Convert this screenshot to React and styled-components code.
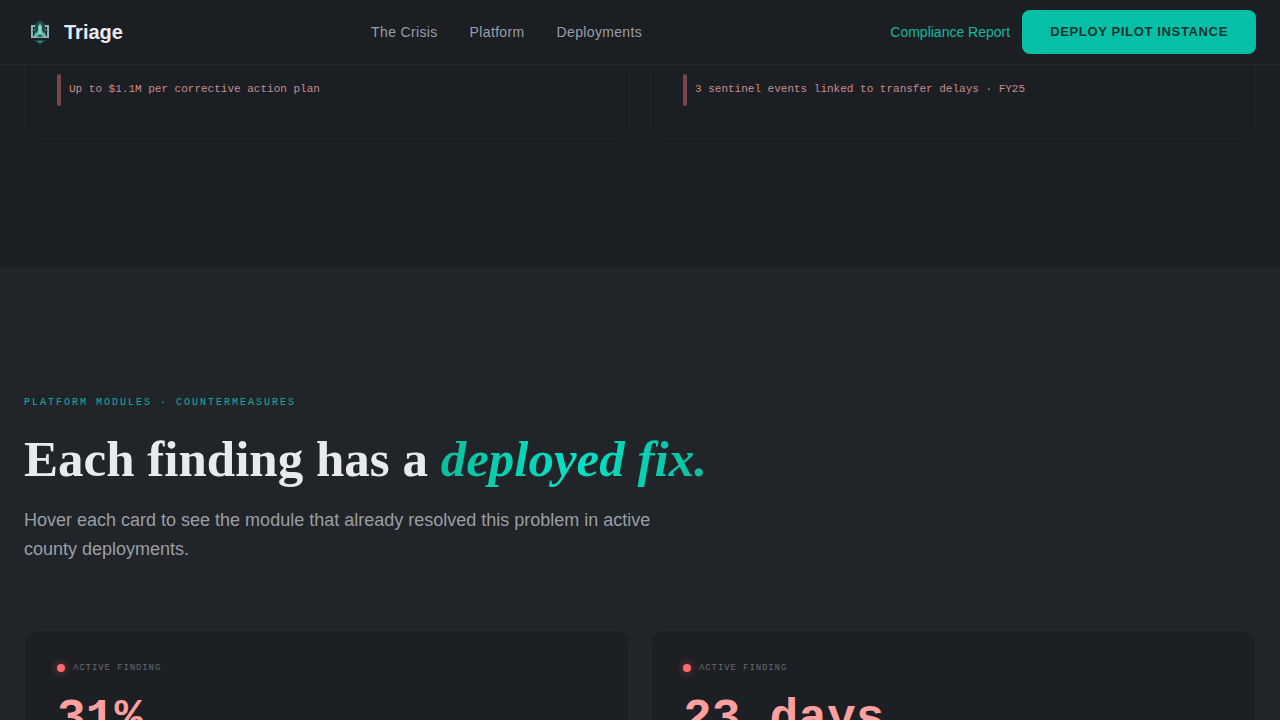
import styled, { createGlobalStyle } from "styled-components";

const GlobalStyle = createGlobalStyle`
  * {
    box-sizing: border-box;
  }
  body {
    margin: 0;
    background: #1b1f23;
    color: #e8eaed;
    font-family: "Liberation Sans", Arial, sans-serif;
  }
  h1, h2, p {
    margin: 0;
  }
`;

const mono = `"Liberation Mono", "Courier New", monospace`;

const Page = styled.div`
  height: 100vh;
  overflow: hidden;
  display: flex;
  flex-direction: column;
`;

const Header = styled.header`
  flex: none;
  height: 65px;
  padding: 0 24px;
  display: flex;
  align-items: center;
  justify-content: space-between;
  background: #1b1e23;
  border-bottom: 1px solid #25282d;
`;

const Brand = styled.a`
  display: flex;
  align-items: center;
  gap: 8px;
  color: #e9ecf1;
  font-size: 20px;
  font-weight: 700;
  text-decoration: none;
`;

const Nav = styled.nav`
  display: flex;
  gap: 32px;
`;

const NavLink = styled.a`
  color: #9a9ea6;
  font-size: 14px;
  letter-spacing: 0.025em;
  text-decoration: none;
`;

const Actions = styled.div`
  display: flex;
  align-items: center;
  gap: 12px;
`;

const ReportLink = styled.a`
  color: #14b8a0;
  font-size: 14px;
  text-decoration: none;
`;

const DeployButton = styled.button`
  height: 44px;
  padding: 0 28px 2px;
  border: 0;
  border-radius: 8px;
  background: #05c0a6;
  color: #12332f;
  font-family: inherit;
  font-size: 13px;
  font-weight: 700;
  letter-spacing: 0.05em;
  cursor: pointer;
`;

const Section = styled.section`
  flex: none;
  padding: ${(props) => (props.$raised ? "128px 24px" : "0 24px 128px")};
  background: ${(props) => (props.$raised ? "#21252a" : "#1b1f23")};
`;

const Cards = styled.div`
  display: grid;
  grid-template-columns: 1fr 1fr;
  gap: 20px;
`;

const CardEnd = styled.article`
  padding: 9px 32px 32px;
  border: 1px solid #22262a;
  border-top: 0;
  border-radius: 0 0 12px 12px;
  background: #1b1f23;
`;

const Impact = styled.p`
  display: flex;
  gap: 8px;
  height: 32px;
  color: #c98b93;
  font-family: ${mono};
  font-size: 11px;
  line-height: 30px;

  &::before {
    content: "";
    width: 4px;
    border-radius: 2px;
    background: #7a444a;
  }
`;

const Eyebrow = styled.p`
  color: #10b39b;
  font-family: ${mono};
  font-size: 10px;
  line-height: 16px;
  letter-spacing: 2px;
  text-transform: uppercase;
`;

const Title = styled.h1`
  margin-top: 20px;
  color: #e8eaee;
  font-family: "Liberation Serif", "Times New Roman", serif;
  font-size: 51px;
  font-weight: 700;
  line-height: 57px;

  em {
    background: linear-gradient(90deg, #0bbf9f, #08e0c4 50%, #0bbf9f);
    background-clip: text;
    color: transparent;
  }
`;

const Lead = styled.p`
  max-width: 640px;
  margin: 18px 0 66px;
  color: #9a9ea6;
  font-size: 18px;
  line-height: 29px;
`;

const Finding = styled.article`
  padding: 32px;
  border: 1px solid #262a2e;
  border-radius: 12px;
  background: #1c1f23;
`;

const Status = styled.p`
  display: flex;
  align-items: center;
  gap: 8px;
  color: #666a72;
  font-family: ${mono};
  font-size: 9px;
  line-height: 10px;
  letter-spacing: 0.1em;
  text-transform: uppercase;

  &::before {
    content: "";
    width: 8px;
    height: 8px;
    border-radius: 50%;
    background: #ff6b6b;
    box-shadow: 0 0 8px rgba(255, 107, 107, 0.5);
  }
`;

const Figure = styled.p`
  margin-top: 22px;
  color: #ff9f9f;
  font-family: ${mono};
  font-size: 48px;
  font-weight: 700;
  line-height: 48px;
`;

const impacts = [
  "Up to $1.1M per corrective action plan",
  "3 sentinel events linked to transfer delays · FY25",
];

const findings = ["31%", "23 days"];

function Logo() {
  return (
    <svg width="32" height="32" viewBox="0 0 32 32" aria-hidden="true">
      <path d="M16 4 L22 9 V22 H10 V9 Z" fill="#234c4c" />
      <path
        d="M11 10 H8 V21 H24 V10 H21"
        fill="none"
        stroke="#93b3b7"
        strokeWidth="2"
      />
      <path d="M11 13 L8 16 M21 13 L24 16" stroke="#5c8588" strokeWidth="1" />
      <path d="M16 7 L18 11 V15 L22 19 V21 H10 V19 L14 15 V11 Z" fill="#5fbfa8" />
      <path d="M16 9 V18" stroke="#c9e8e0" strokeWidth="1" />
      <path d="M13 21 L16 18 L19 21 Z" fill="#245c56" />
      <path d="M10 24 H22 L16 29 Z" fill="#1d4a46" />
      <path d="M13 25 H19 L16 27 Z" fill="#3f9c84" />
    </svg>
  );
}

export default function App() {
  return (
    <Page>
      <GlobalStyle />
      <Header>
        <Brand href="#top">
          <Logo />
          Triage
        </Brand>
        <Nav>
          <NavLink href="#crisis">The Crisis</NavLink>
          <NavLink href="#platform">Platform</NavLink>
          <NavLink href="#deployments">Deployments</NavLink>
        </Nav>
        <Actions>
          <ReportLink href="#report">Compliance Report</ReportLink>
          <DeployButton type="button">DEPLOY PILOT INSTANCE</DeployButton>
        </Actions>
      </Header>
      <Section id="crisis">
        <Cards>
          {impacts.map((text) => (
            <CardEnd key={text}>
              <Impact>{text}</Impact>
            </CardEnd>
          ))}
        </Cards>
      </Section>
      <Section id="platform" $raised>
        <Eyebrow>Platform Modules · Countermeasures</Eyebrow>
        <Title>
          Each finding has a <em>deployed fix.</em>
        </Title>
        <Lead>
          Hover each card to see the module that already resolved this problem
          in active county deployments.
        </Lead>
        <Cards>
          {findings.map((value) => (
            <Finding key={value}>
              <Status>Active Finding</Status>
              <Figure>{value}</Figure>
            </Finding>
          ))}
        </Cards>
      </Section>
    </Page>
  );
}
